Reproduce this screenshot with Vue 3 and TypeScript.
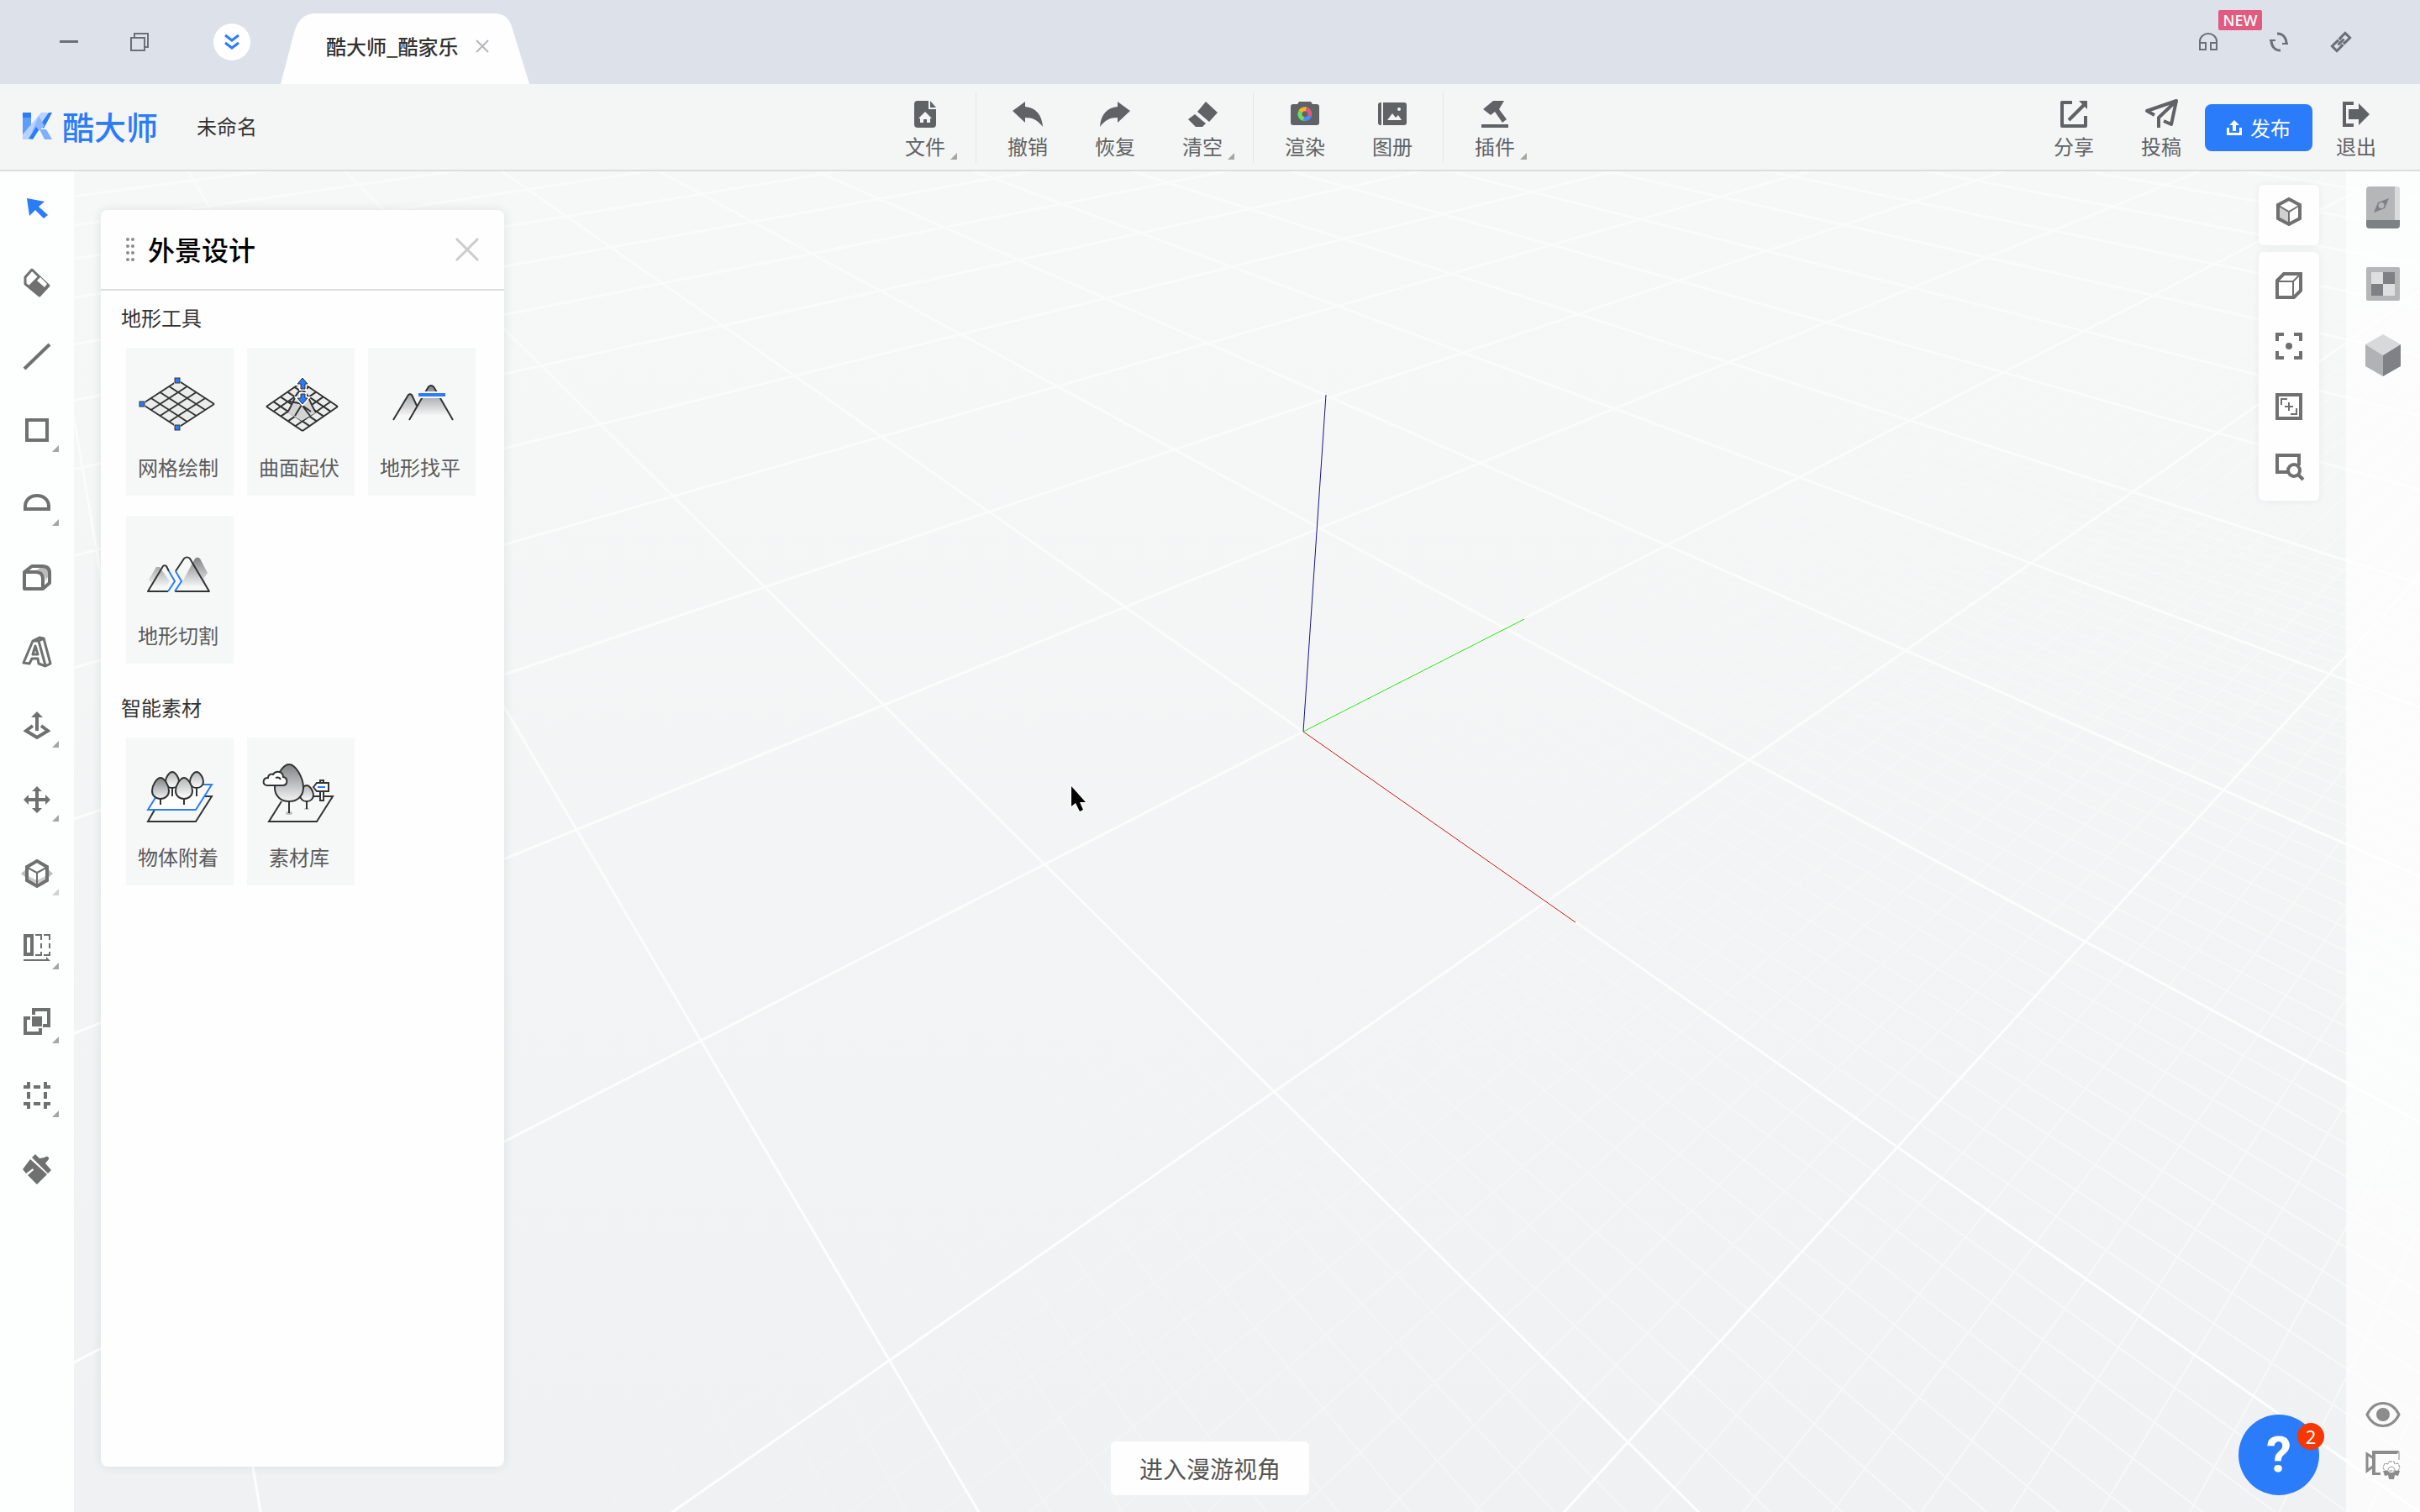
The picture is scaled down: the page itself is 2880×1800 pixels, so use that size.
<script setup lang="ts">
interface Action {
  label: string
  icon: string
  menu?: boolean
}

interface Tool {
  name: string
  icon: string
  menu?: boolean
  faint?: boolean
}

const DARK = '#5f6366'
const GREY = '#707070'

const fileAction: Action = {
  label: '文件',
  menu: true,
  icon: `<path fill="${DARK}" d="M9 2h13v10h9v18a4 4 0 0 1-4 4H9a4 4 0 0 1-4-4V6a4 4 0 0 1 4-4z"/><path fill="${DARK}" d="M24 2l7 8h-7z"/><path fill="#f4f5f5" d="M18 15l8 8h-2v5h-4v-4h-4v4h-4v-5h-2z"/>`,
}

const groups: Action[][] = [
  [fileAction],
  [
    { label: '撤销', icon: `<path fill="${DARK}" d="M0 14L15 3v6c12 1 20 9 21 24-6-8-12-11-21-11v6z"/>` },
    { label: '恢复', icon: `<path fill="${DARK}" d="M36 14L21 3v6C9 10 1 18 0 33c6-8 12-11 21-11v6z"/>` },
    {
      label: '清空',
      menu: true,
      icon: `<path fill="${DARK}" d="M22 3l14 13-10 11L12 15z"/><path fill="${DARK}" d="M9 18l13 11-4 4h-8L1 24z"/>`,
    },
  ],
  [
    {
      label: '渲染',
      icon: `<path fill="${DARK}" d="M9 6l2-3h14l2 3h5a3 3 0 0 1 3 3v19a3 3 0 0 1-3 3H4a3 3 0 0 1-3-3V9a3 3 0 0 1 3-3z"/><g fill="none" stroke-width="5"><path stroke="#f7b32b" d="M12.5 15a6 6 0 0 1 7-3"/><path stroke="#e2597c" d="M19.5 12a6 6 0 0 1 4 8"/><path stroke="#4d8cf0" d="M23.500 20a6 6 0 0 1-7 3.500"/><path stroke="#6fdc62" d="M16.500 23.500a6 6 0 0 1-4-8.500"/></g>`,
    },
    {
      label: '图册',
      icon: `<path fill="${DARK}" d="M4 4h1v27H4a3 3 0 0 1-3-3V7a3 3 0 0 1 3-3z"/><path fill="${DARK}" d="M7 4h25a3 3 0 0 1 3 3v21a3 3 0 0 1-3 3H7z"/><circle cx="26" cy="12" r="2" fill="#f4f5f5"/><path fill="#f4f5f5" d="M12 25l6-8 4 5 3-3 4 6z"/>`,
    },
  ],
  [
    {
      label: '插件',
      menu: true,
      icon: `<path fill="${DARK}" d="M16 2h13l-6 10 9 12-5 4-9-13-5 4-9-7z"/><path fill="${DARK}" d="M2 30h32v4H2z"/>`,
    },
  ],
]

const shareActions: Action[] = [
  {
    label: '分享',
    icon: `<path fill="none" stroke="${DARK}" stroke-width="4" stroke-linejoin="round" d="M16 4H4v28h28V20"/><path fill="none" stroke="${DARK}" stroke-width="4" d="M12 25L30 7"/><path fill="${DARK}" d="M24 2h10v10z"/>`,
  },
  {
    label: '投稿',
    icon: `<path fill="none" stroke="${DARK}" stroke-width="4" stroke-linejoin="round" d="M10 19L1 14 36 2l-6 28-9-4M15 34V22L34 4"/>`,
  },
]

const exitAction: Action = {
  label: '退出',
  icon: `<path fill="none" stroke="${DARK}" stroke-width="4" d="M15 5H4v26h11"/><path fill="${DARK}" d="M9 12h12V5l13 13-13 13v-7H9z"/>`,
}

const tools: Tool[] = [
  { name: '选择', icon: `<path fill="#2a7cfb" d="M8 8l21 4-7 6 11 10-5 4-10-10-7 7z"/>` },
  {
    name: '橡皮擦',
    icon: `<path fill="#fff" stroke="${GREY}" stroke-width="3" stroke-linejoin="round" d="M14 5l20 19-11 12L6 22v-8z"/><path fill="${GREY}" d="M10 24l12-12 12 12-11 12z"/><path fill="#fff" d="M20 18l4-4 8 8-3 4z"/>`,
  },
  { name: '直线', icon: `<path stroke="${GREY}" stroke-width="4" d="M5 35L35 6"/>` },
  { name: '矩形', menu: true, icon: `<rect x="8" y="8" width="24" height="24" fill="none" stroke="${GREY}" stroke-width="4"/>` },
  { name: '圆弧', menu: true, icon: `<path fill="none" stroke="${GREY}" stroke-width="4" d="M6 26v-3c0-8 6-13 14-13s14 5 14 13v3z"/>` },
  {
    name: '倒角',
    icon: `<path fill="#bbb" d="M19 11l8-5c6 0 9 3 9 9l-6 8c0-8-4-12-11-12z"/><path fill="none" stroke="${GREY}" stroke-width="4" stroke-linejoin="round" d="M5 33V13h14c6 0 8 3 8 8v12zM5 13l9-7h12c6 0 9 3 9 8v12l-8 7"/>`,
  },
  {
    name: '三维文字',
    icon: `<path fill="none" stroke="${GREY}" stroke-width="3" stroke-linejoin="round" d="M4 33L15 7l8-4 5 1 8 30-6 3-8-3-1-6h-7l-3 6zM15 7h7l8 29M22 7l6-3M18 13l-3 10h6z"/>`,
  },
  {
    name: '推拉',
    menu: true,
    icon: `<path fill="none" stroke="${GREY}" stroke-width="4" d="M15 20L7 26l13 8 13-8-8-6"/><path fill="${GREY}" d="M20 3l7 7h-5v16h-4V10h-5z"/>`,
  },
  {
    name: '移动',
    menu: true,
    icon: `<path fill="${GREY}" d="M20 4l6 6h-4v8h8v-4l6 6-6 6v-4h-8v8h4l-6 6-6-6h4v-8h-8v4l-6-6 6-6v4h8v-8h-4z"/>`,
  },
  {
    name: '剖切',
    menu: true,
    faint: true,
    icon: `<path fill="#bbb" d="M7 15v10l-6-5zM33 15v10l6-5z"/><path fill="#ccc" d="M8 22l12 6 12-6v5l-12 5-12-5z"/><path fill="none" stroke="${GREY}" stroke-width="4" d="M20 5l12 7v16l-12 7-12-7V12z"/><path fill="none" stroke="${GREY}" stroke-width="2" d="M9 13l11 6 11-6M20 19v15"/>`,
  },
  {
    name: '镜像阵列',
    menu: true,
    icon: `<path fill="none" stroke="${GREY}" stroke-width="4" d="M6 6h8v22H6z"/><path fill="none" stroke="${GREY}" stroke-width="2" d="M18 5h7v6m0 4v6m0 4v4h-7M28 5h7v6m0 4v6m0 4v4h-7M4 35h30"/><path fill="${GREY}" d="M31 31l5 5h-5z"/>`,
  },
  {
    name: '布尔运算',
    menu: true,
    icon: `<path fill="none" stroke="${GREY}" stroke-width="4" d="M12 16H6v18h18v-6M16 12V6h18v19h-7"/><path fill="${GREY}" d="M14 14h12v12H14z"/>`,
  },
  {
    name: '群组',
    menu: true,
    icon: `<path fill="none" stroke="${GREY}" stroke-width="4" d="M10 4v8M4 10h8M30 4v8M28 10h8M10 28v8M4 30h8M30 28v8M28 30h8M16 10h8M16 30h8M10 16v8M30 16v8"/>`,
  },
  {
    name: '材质刷',
    icon: `<path fill="${GREY}" d="M18 2l5 5 6-1c3-3 6 0 5 2l-4 5 7 8-4 4L14 6z"/><path fill="${GREY}" d="M12 8l20 18-12 12L9 27l7-6-1-2-8 6-4-5z"/>`,
  },
]

const viewTools: Tool[] = [
  {
    name: '透视视图',
    icon: `<path fill="#d0d0d0" d="M8 13l12 7v14l-12-7z"/><path fill="none" stroke="${GREY}" stroke-width="4" d="M20 5l13 7v16l-13 7-13-7V12z"/><path fill="none" stroke="${GREY}" stroke-width="2" d="M8 13l12 7 12-7M20 20v14"/>`,
  },
  {
    name: '标准视图',
    icon: `<path fill="none" stroke="${GREY}" stroke-width="4" d="M6 14l8-8h20v20l-8 8H6z"/><path fill="none" stroke="${GREY}" stroke-width="2" d="M6 15h19l9-9M25 15v19"/>`,
  },
  {
    name: '聚焦',
    icon: `<path fill="none" stroke="${GREY}" stroke-width="4" d="M6 14V6h8M26 6h8v8M34 26v8h-8M14 34H6v-8"/><circle cx="20" cy="20" r="4" fill="${GREY}"/>`,
  },
  {
    name: '充满视图',
    icon: `<path fill="none" stroke="${GREY}" stroke-width="4" d="M6 6h28v28H6z"/><path fill="none" stroke="${GREY}" stroke-width="2" d="M11 18v-7h7M29 22v7h-7M15 20h10M20 15v10"/>`,
  },
  {
    name: '窗口缩放',
    icon: `<path fill="none" stroke="${GREY}" stroke-width="4" d="M20 26H6V6h26v12"/><circle cx="26" cy="24" r="7" fill="#fff" stroke="${GREY}" stroke-width="4"/><path stroke="${GREY}" stroke-width="4" d="M31 29l6 6"/>`,
  },
]

const sideTools: Tool[] = [
  {
    name: '导航手册',
    icon: `<path fill="#b4b6b8" d="M9 1h30v41H5V5a4 4 0 0 1 4-4z"/><path fill="#d9dadb" d="M39 1h3a3 3 0 0 1 3 3v38h-6z"/><path fill="#7d8085" d="M5 41h40v6a4 4 0 0 1-4 4H9a4 4 0 0 1-4-4z"/><path fill="#7d8085" fill-rule="evenodd" d="M32 15l-5 12-13 5 5-12zM23 20a3 3 0 1 0 0 7 3 3 0 0 0 0-7z"/>`,
  },
  {
    name: '材质',
    icon: `<rect x="5" y="9" width="40" height="40" rx="2" fill="#b4b6b8"/><path fill="#dedfe0" d="M11 15h14v14H11zM25 29h14v14H25z"/><path fill="#7d8085" d="M25 15h14v14H25zM11 29h14v14H11z"/>`,
  },
  {
    name: '模型',
    icon: `<path fill="#d8d9da" d="M25 1l21 12-21 13L4 13z"/><path fill="#b0b2b4" d="M4 13l21 13v25L4 39z"/><path fill="#7f8186" d="M46 13L25 26v25l21-12z"/>`,
  },
]

type Pt = [number, number]

/* Wire mesh of an n × n diamond given its left, top and right corners. */
function mesh(l: Pt, t: Pt, r: Pt, n: number): string {
  const b: Pt = [l[0] + r[0] - t[0], l[1] + r[1] - t[1]]
  const mix = (p: Pt, q: Pt, k: number) => `${p[0] + (q[0] - p[0]) * k} ${p[1] + (q[1] - p[1]) * k}`
  let d = ''
  for (let s = 0; s <= n; s++) {
    d += `M${mix(l, t, s / n)}L${mix(b, r, s / n)}M${mix(l, b, s / n)}L${mix(t, r, s / n)}`
  }
  return d
}

function tree(x: number, top: number, bottom: number, half: number, foot: number, fill: string): string {
  const h = bottom - top
  const wide = bottom - half * 0.95
  const shoulder = top + h * 0.35
  return `<path fill="none" stroke="#333" stroke-width="2" d="M${x} ${bottom}V${foot}"/><path fill="url(#${fill})" stroke="#333" stroke-width="2" d="M${x} ${top}C${x + half * 0.45} ${top} ${x + half} ${shoulder} ${x + half} ${wide}C${x + half} ${bottom - half * 0.4} ${x + half * 0.6} ${bottom} ${x} ${bottom}C${x - half * 0.6} ${bottom} ${x - half} ${bottom - half * 0.4} ${x - half} ${wide}C${x - half} ${shoulder} ${x - half * 0.45} ${top} ${x} ${top}z"/>`
}

const handle = (x: number, y: number) =>
  `<rect x="${x - 4}" y="${y - 4}" width="8" height="8" fill="#f6f8f8"/><rect x="${x - 3}" y="${y - 3}" width="6" height="6" fill="#2a7cfb" stroke="#333"/>`

const sections = [
  {
    title: '地形工具',
    cards: [
      {
        label: '网格绘制',
        icon: `<path fill="#ebecec" d="M5 43l43-28 43 28-43 28z"/><path fill="none" stroke="#333" stroke-width="2" d="${mesh([5, 43], [48, 15], [91, 43], 4)}"/>${handle(5, 43)}${handle(47, 15)}${handle(47, 71)}`,
      },
      {
        label: '曲面起伏',
        icon: `<path fill="#ebecec" d="M9 46l42-29 43 29-43 29z"/><path fill="none" stroke="#333" stroke-width="2" d="${mesh([9, 46], [51, 17], [94, 46], 5)}"/><path fill="#d4d4d4" d="M51 27c7 0 9 14 17 26L51 63 34 53c8-12 10-26 17-26z"/><path fill="none" stroke="#333" stroke-width="2" d="M51 27c7 0 9 14 17 26M34 53c8-12 10-26 17-26M43 57l8-13 10 13M36 40l12 2 14 10"/><path fill="#2a7cfb" stroke="#fff" stroke-width="4" paint-order="stroke" d="M52 12l6 7h-3v6h-5v-6h-4zM52 43l6-7h-3v-5h-5v5h-4z"/><path fill="#2a7cfb" stroke="#333" d="M52 12l6 7h-3v6h-5v-6h-4zM52 43l6-7h-3v-5h-5v5h-4z"/>`,
      },
      {
        label: '地形找平',
        icon: `<path fill="url(#fade)" d="M20 56l13-23 3-2 3 2 6 12-6 11zM38 56l20-33 3-2 3 2 19 33z"/><path fill="none" stroke="#333" stroke-width="2" d="M16 62l18-30 2-1 2 1 6 13M35 62l22-38c2-4 6-4 8 0l22 38"/><path stroke="#f7f8f8" stroke-width="8" d="M46 32h32"/><path stroke="#2a7cfb" stroke-width="4" d="M46 32h32"/>`,
      },
      {
        label: '地形切割',
        icon: `<path fill="url(#fade)" d="M13 52l9-15h4l12 17-4 6H18zM50 60l18-33c2-2 4-2 6 0l9 17-4 6 3 10z"/><path fill="none" stroke="#333" stroke-width="2" stroke-linejoin="round" d="M36 66H12l18-30c1-1 3-1 4 0l3 6M45 42l10-15c2-2 5-2 7 0l23 39H44"/><path fill="none" stroke="#2a7cfb" stroke-width="2" d="M37 42l7 12-8 12M45 42l7 12-8 12"/>`,
      },
    ],
  },
  {
    title: '智能素材',
    cards: [
      {
        label: '物体附着',
        icon: `<path fill="none" stroke="#333" stroke-width="2" d="M20 62l-8 14h57l19-30h-8"/><path fill="#fff" stroke="#2a7cfb" stroke-width="2" d="M78 32h10L69 62H12l10-16"/>${tree(41, 17, 36, 8, 46, 'light')}${tree(70, 17, 36, 8, 46, 'light')}${tree(27, 24, 49, 10, 56, 'fade')}${tree(55, 24, 49, 10, 56, 'light')}`,
      },
      {
        label: '素材库',
        icon: `<path fill="none" stroke="#333" stroke-width="2" d="M27 52L12 76h57l19-30H65"/><ellipse cx="36" cy="66" rx="4" ry="2" fill="#bbb"/><ellipse cx="57" cy="61" rx="3" ry="1" fill="#bbb"/>${tree(57, 33, 52, 8, 61, 'light')}${tree(36, 8, 52, 17, 66, 'fade')}<path fill="#fff" stroke="#333" stroke-width="2" d="M10 33c-6 0-6-9 1-9 0-4 4-5 6-4 3-5 12-4 12 3 6 1 6 10-1 10z"/><path fill="none" stroke="#333" stroke-width="2" d="M20 24c3-1 5 0 6 2"/><path fill="#fff" stroke="#333" stroke-width="2" d="M73 51V27h4v24z"/><path fill="#fff" stroke="#333" stroke-width="2" d="M65 35l4-5h14v10H69z"/><path stroke="#2a7cfb" stroke-width="2" d="M70 35h9"/>`,
      },
    ],
  },
]

/* Ground-plane camera: u runs along the green axis, v along the red one. */
const U_TILT = 0.1237
const V_TILT = 0.154
const NEAR = 0.12

function project(u: number, v: number): string {
  const w = 1 + U_TILT * u - V_TILT * v
  const x = (1551 + 461.6 * u + 5.8 * v) / w
  const y = (871 - 30.7 * u + 37 * v) / w
  return `${x.toFixed(1)} ${y.toFixed(1)}`
}

function ground(uFrom: number, uTo: number, vFrom: number, vTo: number, perUnit: number): string {
  let d = ''
  for (let n = uFrom * perUnit; n <= uTo * perUnit; n++) {
    const u = n / perUnit
    d += `M${project(u, -16)}L${project(u, (1 + U_TILT * u - NEAR) / V_TILT)}`
  }
  for (let n = vFrom * perUnit; n <= vTo * perUnit; n++) {
    const v = n / perUnit
    d += `M${project((NEAR - 1 + V_TILT * v) / U_TILT, v)}L${project(24, v)}`
  }
  return d
}

const majorLines = ground(-6, 14, -12, 5, 1)
const minorLines = ground(-6, 4, -2, 5, 10)
</script>

<template>
  <div class="app">
    <header class="titlebar">
      <button class="win minimize" aria-label="最小化">
        <svg width="22" height="22" viewBox="0 0 22 22"><path fill="#6b6f78" d="M0 9h22v3H0z" /></svg>
      </button>
      <button class="win restore" aria-label="还原">
        <svg width="22" height="22" viewBox="0 0 22 22">
          <path fill="none" stroke="#6b6f78" stroke-width="2" d="M5 5V1h16v16h-4M1 6h16v15H1z" />
        </svg>
      </button>
      <button class="win collapse" aria-label="收起">
        <svg width="18" height="20" viewBox="0 0 18 20">
          <path fill="none" stroke="#2a7cfb" stroke-width="3" d="M1 2l8 6 8-6M1 11l8 6 8-6" />
        </svg>
      </button>
      <div class="tab">
        <svg class="tab-shape" viewBox="0 0 296 84" preserveAspectRatio="none" aria-hidden="true">
          <path fill="#fefefe" d="M0 84L16 23C20 8 28 0 42 0h212c14 0 20 8 23 22l19 62z" />
        </svg>
        <span class="tab-title">酷大师_酷家乐</span>
        <button class="tab-close" aria-label="关闭标签">
          <svg width="16" height="16" viewBox="0 0 16 16"><path stroke="#b4b6ba" stroke-width="2" d="M1 1l14 14M15 1L1 15" /></svg>
        </button>
      </div>
      <div class="win-right">
        <button class="win-icon" aria-label="客服">
          <svg width="24" height="24" viewBox="0 0 24 24">
            <path fill="none" stroke="#6b6f78" stroke-width="2" d="M2 14v-3a10 9 0 0 1 20 0v3M2 13h7v8H2zM15 13h7v8h-7z" />
          </svg>
          <span class="new">NEW</span>
        </button>
        <button class="win-icon" aria-label="同步">
          <svg width="24" height="24" viewBox="0 0 24 24">
            <path fill="none" stroke="#6b6f78" stroke-width="3" d="M10 2c7 0 11 5 11 12M14 22C7 22 3 17 3 10" />
            <path fill="none" stroke="#6b6f78" stroke-width="2" d="M16 14h7M1 10h7" />
          </svg>
        </button>
        <button class="win-icon pin" aria-label="链接">
          <svg width="24" height="24" viewBox="0 0 24 24">
            <g transform="rotate(-45 12 12)" fill="none" stroke="#6b6f78" stroke-width="3">
              <path d="M10 10V8H1v8h9v-2M14 10V8h9v8h-9v-2M7 12h10" />
            </g>
          </svg>
        </button>
      </div>
    </header>

    <div class="toolbar">
      <div class="brand">
        <svg width="35" height="32" viewBox="0 0 35 32" aria-hidden="true">
          <path fill="#2a7cfb" d="M0 0h10v20L0 32z" />
          <path fill="#5d9bff" d="M0 6h10v14L0 32z" />
          <path fill="#2a7cfb" d="M28 0h7L25 19l-5-5z" />
          <path fill="#b9d3ff" d="M22 0h9L17 20 8 32H0v-6z" />
          <path fill="#8fb6ff" d="M19 4l7 12-6 5-9 2z" />
          <path fill="#2a7cfb" d="M7 31l9-14 3 4-7 11z" />
          <path fill="#7fb0ff" d="M20 20h8l7 12h-9z" />
        </svg>
        <span class="brand-name">酷大师</span>
        <span class="doc-name">未命名</span>
      </div>
      <nav class="groups">
        <div v-for="(group, g) in groups" :key="g" class="group">
          <button v-for="a in group" :key="a.label" class="action">
            <svg width="36" height="36" viewBox="0 0 36 36" v-html="a.icon"></svg>
            <span>{{ a.label }}</span>
            <i v-if="a.menu" class="corner"></i>
          </button>
        </div>
      </nav>
      <div class="share">
        <button v-for="a in shareActions" :key="a.label" class="action">
          <svg width="36" height="36" viewBox="0 0 36 36" v-html="a.icon"></svg>
          <span>{{ a.label }}</span>
        </button>
        <button class="publish">
          <svg width="18" height="18" viewBox="0 0 18 18">
            <path fill="#fff" d="M9 0l6 6h-4v7H7V6H3zM0 9h3v6h12V9h3v9H0z" />
          </svg>
          <span>发布</span>
        </button>
        <button class="action">
          <svg width="36" height="36" viewBox="0 0 36 36" v-html="exitAction.icon"></svg>
          <span>{{ exitAction.label }}</span>
        </button>
      </div>
    </div>

    <main class="workspace">
      <svg class="scene" viewBox="0 204 2880 1596" preserveAspectRatio="xMidYMid slice" aria-hidden="true">
        <defs>
          <linearGradient id="fade" x1="0" y1="0" x2="0" y2="1">
            <stop offset="0" stop-color="#808284" />
            <stop offset="1" stop-color="#f4f4f5" />
          </linearGradient>
          <linearGradient id="light" x1="0" y1="0" x2="0" y2="1">
            <stop offset="0" stop-color="#b4b5b6" />
            <stop offset="1" stop-color="#fff" />
          </linearGradient>
          <linearGradient id="far" gradientUnits="userSpaceOnUse" x1="0" y1="204" x2="0" y2="1500">
            <stop offset="0" stop-color="#fff" stop-opacity=".45" />
            <stop offset="1" stop-color="#fff" stop-opacity=".9" />
          </linearGradient>
          <linearGradient id="near" gradientUnits="userSpaceOnUse" x1="1500" y1="900" x2="2300" y2="1800">
            <stop offset="0" stop-color="#fff" stop-opacity="0" />
            <stop offset="1" stop-color="#fff" stop-opacity=".5" />
          </linearGradient>
        </defs>
        <path :d="minorLines" fill="none" stroke="url(#near)" stroke-width="2" />
        <path :d="majorLines" fill="none" stroke="url(#far)" stroke-width="3" />
        <path d="M1551 871L1578 470" stroke="#15158c" stroke-width="1" />
        <path d="M1551 871L1814 737" stroke="#1fe010" stroke-width="1" />
        <path d="M1551 871L1875 1098" stroke="#c40d08" stroke-width="1" />
        <path d="M1275 936v24l5-4 5 10 4-2-4-9h7z" fill="#000" stroke="#fff" stroke-width="2" paint-order="stroke" />
      </svg>

      <aside class="rail">
        <button v-for="(t, n) in tools" :key="n" class="tool" :aria-label="t.name">
          <svg width="40" height="40" viewBox="0 0 40 40" v-html="t.icon"></svg>
          <i v-if="t.menu" class="corner" :class="{ faint: t.faint }"></i>
        </button>
      </aside>

      <div class="stage">
        <section class="panel">
          <div class="panel-head">
            <svg width="10" height="28" viewBox="0 0 10 28" fill="#8c8c8c" aria-hidden="true">
              <circle cx="2" cy="2" r="2" /><circle cx="8" cy="2" r="2" />
              <circle cx="2" cy="10" r="2" /><circle cx="8" cy="10" r="2" />
              <circle cx="2" cy="18" r="2" /><circle cx="8" cy="18" r="2" />
              <circle cx="2" cy="26" r="2" /><circle cx="8" cy="26" r="2" />
            </svg>
            <h2>外景设计</h2>
            <button class="panel-close" aria-label="关闭面板">
              <svg width="28" height="28" viewBox="0 0 28 28"><path stroke="#ccc" stroke-width="3" d="M1 1l26 26M27 1L1 27" /></svg>
            </button>
          </div>
          <div v-for="s in sections" :key="s.title" class="section">
            <h3>{{ s.title }}</h3>
            <div class="cards">
              <button v-for="c in s.cards" :key="c.label" class="card">
                <svg width="96" height="80" viewBox="0 0 96 80" v-html="c.icon"></svg>
                <span>{{ c.label }}</span>
              </button>
            </div>
          </div>
        </section>

        <button class="roam">进入漫游视角</button>

        <div class="view-column">
          <div class="view-box">
            <button class="view-tool" :aria-label="viewTools[0].name">
              <svg width="40" height="40" viewBox="0 0 40 40" v-html="viewTools[0].icon"></svg>
            </button>
          </div>
          <div class="view-box tall">
            <button v-for="t in viewTools.slice(1)" :key="t.name" class="view-tool" :aria-label="t.name">
              <svg width="40" height="40" viewBox="0 0 40 40" v-html="t.icon"></svg>
            </button>
          </div>
          <button class="help" aria-label="帮助">
            <span class="mark">?</span>
            <span class="badge">2</span>
          </button>
        </div>
      </div>

      <aside class="side">
        <button v-for="t in sideTools" :key="t.name" class="tool" :aria-label="t.name">
          <svg width="50" height="54" viewBox="0 0 50 54" v-html="t.icon"></svg>
        </button>
        <div class="side-bottom">
          <button class="side-small" aria-label="显示">
            <svg width="42" height="32" viewBox="0 0 42 32">
              <path fill="none" stroke="#8c8c8c" stroke-width="3" d="M2 16C11-2 31-2 40 16 31 34 11 34 2 16z" />
              <circle cx="21" cy="16" r="8" fill="#8c8c8c" />
            </svg>
          </button>
          <button class="side-small" aria-label="相机设置">
            <svg width="42" height="34" viewBox="0 0 42 34">
              <path fill="#8c8c8c" d="M8 0h32l-2 4H12v22h6v3H8z" />
              <path fill="none" stroke="#8c8c8c" stroke-width="3" d="M10 9L2 4v20l8-6" />
              <path stroke="#8c8c8c" d="M40 1v10" />
              <path fill="#fff" stroke="#8c8c8c" stroke-dasharray="4 1" d="M28 13h6l1 3 4-1 2 5-2 4H23l-2-4 2-5 4 1z" />
              <path fill="#8c8c8c" d="M21 24h6c2 3 6 3 8 0h6l-2 6-4-1-1 5h-6l-1-5-4 1z" />
              <path fill="none" stroke="#8c8c8c" d="M27 23c0-5 8-5 8 0" />
            </svg>
          </button>
        </div>
      </aside>
    </main>
  </div>
</template>

<style>
body {
  margin: 0;
}
</style>

<style scoped>
.app {
  display: flex;
  flex-direction: column;
  min-height: 100vh;
  font-family: "Noto Sans CJK SC", "Noto Sans", sans-serif;
  font-size: 24px;
  line-height: 32px;
  color: #333;
  background: #f4f5f5;
}

button {
  position: relative;
  margin: 0;
  padding: 0;
  border: 0;
  background: none;
  font: inherit;
  color: inherit;
}

svg {
  display: block;
  flex: none;
  overflow: visible;
}

.titlebar {
  display: flex;
  align-items: center;
  height: 100px;
  padding-left: 60px;
  background: #dce1ea;
}

.win {
  display: flex;
  align-items: center;
  justify-content: center;
  width: 44px;
  height: 44px;
}

.restore {
  margin-left: 40px;
}

.collapse {
  margin-left: 66px;
  border-radius: 50%;
  background: #fff;
}

.tab {
  position: relative;
  display: flex;
  align-items: center;
  align-self: flex-end;
  box-sizing: border-box;
  width: 296px;
  height: 84px;
  margin-left: 36px;
  padding: 0 48px 6px 54px;
}

.tab-shape {
  position: absolute;
  inset: 0;
  width: 100%;
  height: 100%;
}

.tab-title {
  position: relative;
  flex: 1;
  font-weight: 500;
  white-space: nowrap;
}

.win-right {
  display: flex;
  gap: 60px;
  margin-left: auto;
  padding-right: 82px;
}

.pin {
  margin-left: -10px;
}

.new {
  position: absolute;
  left: 24px;
  bottom: 26px;
  width: 52px;
  border-radius: 2px;
  background: #e25a80;
  color: #fff;
  font: 500 18px/24px "Noto Sans", sans-serif;
  text-align: center;
}

.toolbar {
  display: grid;
  grid-template-columns: 1fr auto 1fr;
  height: 102px;
  border-bottom: 2px solid #dcdedd;
  background: #f4f5f5;
}

.brand {
  display: flex;
  align-items: center;
  padding: 0 0 2px 27px;
}

.brand-name {
  margin-left: 12px;
  color: #2a7cfb;
  font-size: 38px;
  font-weight: 500;
}

.doc-name {
  margin-left: 46px;
}

.groups,
.group,
.share {
  display: flex;
}

.group + .group::before {
  content: "";
  width: 1px;
  height: 84px;
  margin: 10px 9px 0 8px;
  background: #e4e5e6;
}

.action {
  display: flex;
  flex-direction: column;
  align-items: center;
  gap: 4px;
  width: 104px;
  padding-top: 18px;
  color: #5f6366;
}

.corner {
  position: absolute;
  right: 14px;
  bottom: 12px;
  width: 8px;
  height: 8px;
  background: #a5a5a2;
  clip-path: polygon(100% 0, 100% 100%, 0 100%);
}

.share {
  justify-content: flex-end;
  padding-right: 24px;
}

.publish {
  display: flex;
  align-items: center;
  justify-content: center;
  gap: 10px;
  width: 128px;
  height: 56px;
  margin-top: 24px;
  border-radius: 8px;
  background: #2a7cfb;
  color: #fff;
}

.workspace {
  position: relative;
  display: grid;
  grid-template-columns: 88px 1fr 88px;
  flex: 1;
  background: linear-gradient(#f6f7f7, #f0f1f2);
}

.scene {
  position: absolute;
  inset: 0;
  width: 100%;
  height: 100%;
  overflow: hidden;
}

.rail,
.side {
  position: relative;
  display: flex;
  flex-direction: column;
  background: #fdfefe;
}

.side {
  background: rgba(255, 255, 255, 0.7);
}

.tool {
  display: flex;
  align-items: center;
  justify-content: center;
  width: 88px;
  height: 88px;
}

.tool .corner {
  right: 18px;
  bottom: 18px;
}

.tool .faint {
  opacity: 0.5;
}

.stage {
  position: relative;
  display: grid;
  grid-template-columns: 480px 1fr 96px;
  padding: 0 32px;
}

.panel {
  grid-area: 1 / 1;
  margin: 46px 0 54px;
  border-radius: 8px;
  background: #fefefe;
  box-shadow: 0 0 12px rgba(40, 45, 60, 0.1);
}

.panel-head {
  display: flex;
  align-items: center;
  height: 94px;
  padding: 0 30px;
  border-bottom: 2px solid #dcdedd;
}

h2 {
  flex: 1;
  margin: 0 0 2px 16px;
  color: #000;
  font-size: 32px;
  font-weight: 500;
}

h3 {
  margin: 0 -6px 20px;
  font-size: 24px;
  font-weight: 400;
}

.section {
  padding: 16px 30px 20px;
}

.section + .section {
  padding-top: 16px;
}

.cards {
  display: flex;
  flex-wrap: wrap;
  gap: 24px 16px;
}

.card {
  display: flex;
  flex-direction: column;
  align-items: center;
  gap: 22px;
  box-sizing: border-box;
  width: 128px;
  height: 176px;
  padding: 24px 4px 0 0;
  background: #f6f8f8;
  color: #5c5c5c;
}

.roam {
  grid-area: 1 / 1 / 2 / 4;
  align-self: end;
  justify-self: center;
  height: 64px;
  margin-bottom: 20px;
  padding: 0 34px;
  border-radius: 6px;
  background: #fefefe;
  color: #555;
  font-size: 28px;
}

.view-column {
  display: flex;
  flex-direction: column;
  grid-area: 1 / 3;
  align-items: flex-end;
  gap: 8px;
  padding: 16px 0 20px;
}

.view-box {
  border-radius: 6px;
  background: #fefefe;
  box-shadow: 0 0 8px rgba(40, 45, 60, 0.06);
}

.tall {
  padding: 4px 0;
}

.view-tool {
  display: flex;
  align-items: center;
  justify-content: center;
  width: 72px;
  height: 72px;
}

.view-box:first-child .view-tool {
  height: 64px;
  margin-bottom: 8px;
}

.help {
  width: 96px;
  height: 96px;
  margin-top: auto;
  border-radius: 50%;
  background: #2a7cfb;
  color: #fff;
}

.mark {
  font: 700 60px/96px Roboto, sans-serif;
}

.badge {
  position: absolute;
  top: 10px;
  right: -6px;
  width: 32px;
  height: 32px;
  border-radius: 50%;
  background: #f73600;
  font: 400 22px/32px "Noto Sans", sans-serif;
}

.side-bottom {
  display: flex;
  flex-direction: column;
  margin-top: auto;
  padding-bottom: 26px;
}

.side-small {
  display: flex;
  align-items: center;
  justify-content: center;
  height: 60px;
}
</style>
